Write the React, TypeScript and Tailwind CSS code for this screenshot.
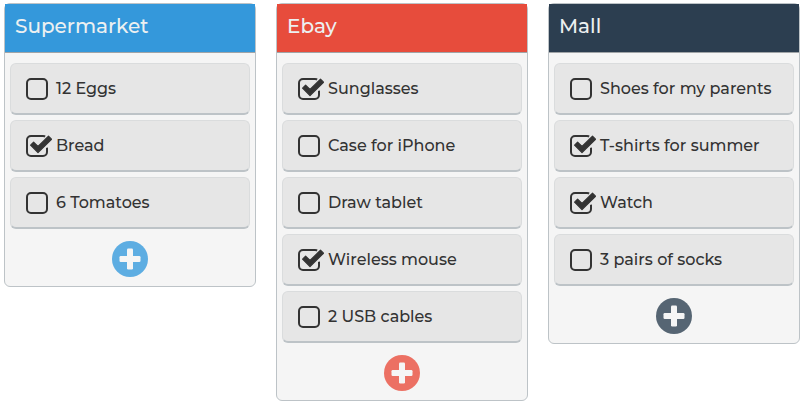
import { useState } from "react";
import { clsx } from "clsx";

type Item = { label: string; done: boolean };
type List = { title: string; header: string; add: string; items: Item[] };

const LISTS: List[] = [
  {
    title: "Supermarket",
    header: "bg-[#3498db]",
    add: "bg-[#5dade2]",
    items: [
      { label: "12 Eggs", done: false },
      { label: "Bread", done: true },
      { label: "6 Tomatoes", done: false },
    ],
  },
  {
    title: "Ebay",
    header: "bg-[#e74c3c]",
    add: "bg-[#ec7063]",
    items: [
      { label: "Sunglasses", done: true },
      { label: "Case for iPhone", done: false },
      { label: "Draw tablet", done: false },
      { label: "Wireless mouse", done: true },
      { label: "2 USB cables", done: false },
    ],
  },
  {
    title: "Mall",
    header: "bg-[#2c3e50]",
    add: "bg-[#566573]",
    items: [
      { label: "Shoes for my parents", done: false },
      { label: "T-shirts for summer", done: true },
      { label: "Watch", done: true },
      { label: "3 pairs of socks", done: false },
    ],
  },
];

function ItemRow({ item }: { item: Item }) {
  const [done, setDone] = useState(item.done);
  return (
    <li>
      <label className="flex h-[52px] cursor-pointer items-center gap-2 rounded-md border border-b-2 border-[#dadcdd] border-b-[#bdc3c7] bg-[#e6e6e6] pl-[15px] text-base font-medium text-[#333333]">
        <span className="relative size-[22px] shrink-0">
          <input
            type="checkbox"
            checked={done}
            onChange={() => setDone(!done)}
            className="block size-full cursor-pointer appearance-none rounded-[5px] border-2 border-[#333333]"
          />
          {done && (
            <svg
              viewBox="0 0 26 22"
              className="pointer-events-none absolute top-0 left-0 h-[22px] w-[26px]"
              aria-hidden="true"
            >
              {/* gap in the box outline where the tick passes through */}
              <path d="M20.5 0H26V8.5L22 12.5 19.5 13V3.5L18.5 2.2Z" fill="#e6e6e6" />
              <path
                d="M4.6 10.2 7.6 7.2 12 11.5 22.5 1.2 25.5 4.2 12 17.6Z"
                fill="#333333"
                stroke="#333333"
                strokeWidth="1.2"
                strokeLinejoin="round"
              />
            </svg>
          )}
        </span>
        <span>{item.label}</span>
      </label>
    </li>
  );
}

function ListPanel({ list }: { list: List }) {
  return (
    <section className="rounded-md border border-[#bdc3c7] bg-[#f5f5f5]">
      <h2
        className={clsx(
          "flex h-[49px] items-center border-b border-[#a0a4a7] px-2.5 pb-1 text-xl font-medium text-[#ecf0f1]",
          list.header,
        )}
      >
        {list.title}
      </h2>
      <ul className="flex flex-col gap-[5px] px-[5px] pt-2.5">
        {list.items.map((item) => (
          <ItemRow key={item.label} item={item} />
        ))}
      </ul>
      <div className="flex justify-center pt-3 pb-[9px]">
        <button
          type="button"
          aria-label={`Add item to ${list.title}`}
          className={clsx(
            "flex size-9 cursor-pointer items-center justify-center rounded-full text-[#f5f5f5]",
            list.add,
          )}
        >
          <svg viewBox="0 0 22 22" className="size-[22px]" fill="currentColor" aria-hidden="true">
            <rect x="8" y="0.5" width="6" height="21" rx="1.2" />
            <rect x="0.5" y="8" width="21" height="6" rx="1.2" />
          </svg>
        </button>
      </div>
    </section>
  );
}

export default function App() {
  return (
    <main className="grid grid-cols-3 items-start gap-5 bg-white px-1 py-[3px] font-[Montserrat,Inter,sans-serif]">
      {LISTS.map((list) => (
        <ListPanel key={list.title} list={list} />
      ))}
    </main>
  );
}
